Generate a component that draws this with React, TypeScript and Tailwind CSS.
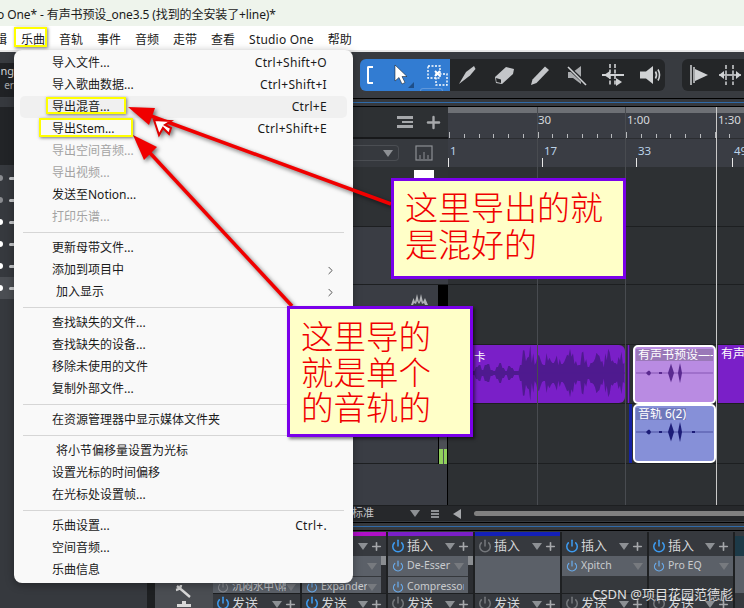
import { ChevronRight, Plus, Power } from "lucide-react";

type MenuEntry = { label?: string; keys?: string; off?: boolean; sub?: boolean; indent?: boolean; hot?: boolean; sep?: boolean };
type Plugin = { name: string; on: boolean; noTri?: boolean };

const menu: MenuEntry[] = [
  { label: "导入文件...", keys: "Ctrl+Shift+O" },
  { label: "导入歌曲数据...", keys: "Ctrl+Shift+I" },
  { label: "导出混音...", keys: "Ctrl+E", hot: true },
  { label: "导出Stem...", keys: "Ctrl+Shift+E" },
  { label: "导出空间音频...", off: true },
  { label: "导出视频...", off: true },
  { label: "发送至Notion..." },
  { label: "打印乐谱...", off: true },
  { sep: true },
  { label: "更新母带文件..." },
  { label: "添加到项目中", sub: true },
  { label: "加入显示", sub: true, indent: true },
  { sep: true },
  { label: "查找缺失的文件..." },
  { label: "查找缺失的设备..." },
  { label: "移除未使用的文件" },
  { label: "复制外部文件..." },
  { sep: true },
  { label: "在资源管理器中显示媒体文件夹" },
  { sep: true },
  { label: "将小节偏移量设置为光标", indent: true },
  { label: "设置光标的时间偏移" },
  { label: "在光标处设置帧..." },
  { sep: true },
  { label: "乐曲设置...", keys: "Ctrl+." },
  { label: "空间音频..." },
  { label: "乐曲信息" },
];

const topMenu = ["音轨", "事件", "音频", "走带", "查看", "Studio One", "帮助"];

const leftRows = [
  { dot: "bg-[#8a8c90]", hot: false },
  { dot: "bg-[#8a8c90]", hot: false },
  { dot: "bg-white", hot: false },
  { dot: "bg-white", hot: false },
  { dot: "bg-white", hot: false },
  { dot: "bg-white", hot: true },
];

const bigEnvelope = [2, 6, 8, 3, 8, 9, 3, 2, 6, 10, 5, 2, 7, 5, 2, 2, 8, 26, 16, 28, 20, 12, 22, 14, 8, 20, 16, 10, 18, 14, 9, 16, 22, 26, 20, 12, 8, 24, 14, 6, 10, 16, 24, 18, 12, 20, 26, 14, 10, 16, 22, 12, 16];
const bigWave = Array.from({ length: 104 }, (_, i) => {
  const base = bigEnvelope[Math.floor(i / 2)];
  return base < 11 ? base : base * (0.45 + 0.55 * Math.abs(Math.sin(i * 1.73)));
});
const ticks = Array.from({ length: 21 }, (_, i) => i);

function wavePath(peaks: number[], step: number, mid: number) {
  const top = peaks.map((p, i) => `${i * step},${mid - p}`);
  const bottom = peaks.map((p, i) => `${i * step},${mid + p}`).reverse();
  return `M${top.join(" L")} L${bottom.join(" L")} Z`;
}

function Tri({ className = "fill-[#8d9094]" }: { className?: string }) {
  return (
    <svg width="10" height="7" viewBox="0 0 10 7" className={className}>
      <path d="M0 0H10L5 7Z" />
    </svg>
  );
}

function Icon({ children, dim = false }: { children: React.ReactNode; dim?: boolean }) {
  return (
    <svg width="24" height="24" viewBox="0 0 24 24" className={dim ? "fill-[#c4c6c9] stroke-[#c4c6c9]" : "fill-white stroke-white"} strokeWidth="0">
      {children}
    </svg>
  );
}

function Toolbar() {
  return (
    <div className="flex h-[48px] items-center border-t-2 border-[#e9e9e9] bg-[#383b40]">
      <div className="flex h-full w-[360px] flex-col justify-start pt-[11px] text-[11px] leading-[15px] text-[#d8d8d8]">
        <div className="w-[14px] overflow-hidden bg-[#202225] text-right">ng</div>
        <div className="w-[14px] overflow-hidden bg-[#202225] pb-[4px] text-right text-[10px] text-[#a8aaad]">er</div>
      </div>
      <div className="relative flex h-[32px] w-[90px] items-center rounded-l-md bg-[#327cd2] pl-[7px]">
        <div className="h-[18px] w-[6px] rounded-l-[2px] border-y-2 border-l-2 border-white" />
        <div className="ml-[17px] flex items-center gap-[12px]">
          <Icon>
            <path d="M5 2 L5 18 L9 14.5 L12 21 L15 19.5 L12 13.5 L17 13.5 Z" stroke="#111" strokeWidth="0.5" />
          </Icon>
          <svg width="24" height="24" viewBox="0 0 24 24" fill="none">
            <rect x="2" y="3" width="12" height="12" stroke="white" strokeDasharray="2 1.5" strokeWidth="1.4" />
            <rect x="10" y="11" width="11" height="11" stroke="white" strokeDasharray="2 1.5" strokeWidth="1.4" />
            <path d="M9 8l5 5m0-5l-5 5" stroke="white" strokeWidth="2" />
          </svg>
        </div>
        <svg width="6" height="6" viewBox="0 0 6 6" className="absolute right-[36px] bottom-[3px] fill-[#1e4e88]">
          <path d="M6 0V6H0Z" />
        </svg>
        <div className="absolute right-[7px] bottom-0 h-[3px] w-[23px] rounded-t-md border-x border-t border-[#5f97da]" />
      </div>
      <div className="flex h-[32px] w-[215px] items-center gap-[12.5px] rounded-r-md bg-[#242628] pl-[5px]">
        <Icon dim>
          <path d="M4 21 L11 9 L19 3 L20.5 6 L15 12.5 Z" />
        </Icon>
        <Icon dim>
          <path d="M3 14 L14 4 L22 6 L21 11 L10 21 L4 20 Z M4 15 L9 16.5 L9 20 L4.5 19 Z" fillRule="evenodd" />
        </Icon>
        <Icon dim>
          <path d="M3 22 L4.5 16.5 L17 3.5 L21 7 L8.5 20 Z" />
        </Icon>
        <svg width="24" height="24" viewBox="0 0 24 24">
          <path d="M3 9H8L16 3V21L8 15H3Z" fill="#a9abae" />
          <path d="M2 3L22 22" stroke="#242628" strokeWidth="3.5" />
          <path d="M3 4L21 22" stroke="#d0d2d4" strokeWidth="1.6" />
        </svg>
        <svg width="24" height="24" viewBox="0 0 24 24" stroke="#d0d2d4" fill="#d0d2d4">
          <path d="M9 1V23M14 1V23" strokeWidth="1.6" strokeDasharray="4 1.5" />
          <path d="M1 12H23" strokeWidth="2" />
          <path d="M9 8L3 12L9 16ZM15 15L21 19L15 23Z" strokeWidth="0" />
        </svg>
        <svg width="24" height="24" viewBox="0 0 24 24" fill="none">
          <path d="M2 8.5H8L15 3V21L8 15.5H2Z" fill="#d0d2d4" />
          <path d="M17.5 8.5Q19.5 12 17.5 15.5M20 6.5Q23 12 20 17.5" stroke="#d0d2d4" strokeWidth="1.6" />
        </svg>
      </div>
      <div className="ml-[17px] flex h-[32px] flex-1 items-center gap-[7px] rounded-l-md bg-[#242628] pl-[5px]">
        <svg width="24" height="24" viewBox="0 0 24 24" stroke="#d0d2d4" fill="#d0d2d4">
          <path d="M4 2V22M7 4V20" strokeWidth="1.5" />
          <path d="M8 6L21 12L8 18Z" strokeWidth="0" />
        </svg>
        <svg width="24" height="24" viewBox="0 0 24 24" stroke="#d0d2d4" fill="#d0d2d4">
          <path d="M8 2V22M15 2V22" strokeWidth="1.5" strokeDasharray="4 1.5" />
          <path d="M1 12H23" strokeWidth="1.6" />
          <path d="M1 12L6 8V16ZM23 12L18 8V16Z" strokeWidth="0" />
        </svg>
      </div>
    </div>
  );
}

function Rule() {
  return (
    <div className="ml-[14px] flex h-[9px] flex-col border-y border-black">
      <div className="h-[3px]" />
      <div className="h-px bg-[#2f6aa8]" />
    </div>
  );
}

function Sidebar() {
  return (
    <div className="flex w-[448px] shrink-0">
      <div className="flex w-[353px] flex-col">
        <div className="h-[58px] w-[14px] bg-[#222427]" />
        <div className="h-[2px]" />
        {leftRows.map((r, i) => (
          <div key={i} className={`flex h-[22px] w-[14px] items-center justify-between ${r.hot ? "bg-[#4b4e53]" : "bg-[#36393e]"}`}>
            <div className={`-ml-[3px] size-[6px] rounded-full ${r.dot}`} />
            <div className="h-[3px] w-[5px] rounded-l-full bg-[#c9cbce]" />
          </div>
        ))}
      </div>
      <div className="flex w-[95px] flex-col">
        <div className="flex h-[32px] items-center border-b-2 border-[#17181a] bg-[#2d3033] pl-[44px]">
          <div className="flex w-[16px] flex-col gap-[2px]">
            <div className="h-[2.5px] bg-[#a6a8ab]" />
            <div className="ml-[5px] h-[2.5px] bg-[#a6a8ab]" />
            <div className="h-[2.5px] bg-[#a6a8ab]" />
          </div>
          <Plus size={19} strokeWidth={3} color="#a6a8ab" className="ml-[11px]" />
        </div>
        <div className="flex h-[28px] items-center bg-[#36393e]">
          <div className="flex h-[16px] w-[46px] items-center justify-end rounded-r-[4px] border border-l-0 border-[#4b4e53] pr-[5px]">
            <Tri />
          </div>
          <svg width="18" height="16" viewBox="0 0 18 16" fill="none" stroke="#8d9094" className="ml-[16px]">
            <rect x="1" y="1" width="16" height="14" strokeWidth="1.2" />
            <path d="M5 14V10M9 14V7M13 14V10" strokeWidth="1" />
          </svg>
        </div>
        <div className="h-[60px] border-b border-[#1d1f21] bg-[#2e3134]">
          <div className="mt-[3px] ml-[61px] h-[10px] w-[20px] bg-white" />
        </div>
        <div className="h-[58px] border-b border-[#1d1f21] bg-[#3a3d44]" />
        <div className="flex h-[60px] bg-[#3a3d44]">
          <div className="flex-1 border-b border-[#1d1f21] pt-[8px] pl-[58px]">
            <svg width="17" height="12" viewBox="0 0 17 12" fill="#b0b2b5">
              <path d="M0 12L2.5 5L4 9L6 1L8 9L10 1L12 9L14 5L17 12H14L13 10L11 11L10 8L8 11L6 8L5 11L3 10L2 12Z" />
            </svg>
          </div>
          <div className="w-[10px] bg-black" />
        </div>
        <div className="flex h-[59px] bg-[#3a3d44]">
          <div className="flex-1 border-b border-[#1d1f21]" />
          <div className="w-[10px] bg-black" />
        </div>
        <div className="flex h-[60px] bg-[#3a3d44]">
          <div className="flex-1 border-b border-[#1d1f21]" />
          <div className="flex w-[10px] flex-col justify-end border-x border-black bg-[#4c4f55]">
            <div className="flex h-[15px] gap-px">
              <div className="flex-1 bg-[#90d05c]" />
              <div className="flex-1 bg-[#90d05c]" />
            </div>
          </div>
        </div>
        <div className="flex h-[41px] bg-[#3a3d44]">
          <div className="flex-1" />
          <div className="w-px bg-black" />
        </div>
        <div className="flex h-[16px] items-center border-t border-[#1d1f21] bg-[#26282b] text-[11px] text-[#c4c6c9]">
          <span className="-ml-px w-[58px] overflow-hidden whitespace-nowrap">标准</span>
          <Tri />
          <div className="ml-[11px] flex w-[8px] flex-col gap-px">
            <div className="h-[2px] bg-[#8d9094]" />
            <div className="h-[2px] bg-[#8d9094]" />
            <div className="h-[2px] bg-[#8d9094]" />
          </div>
        </div>
      </div>
    </div>
  );
}

function Clip({ title, bg, tag, wave, tagWidth, extra = false }: { title: string; bg: string; tag: string; wave: string; tagWidth: string; extra?: boolean }) {
  return (
    <div className={`flex h-full w-[83px] flex-col rounded-[5px] border-2 border-white ${bg} px-[1px] pt-[2px]`}>
      <div className={`h-[12px] overflow-hidden whitespace-nowrap pl-[2px] text-[12px] leading-[12px] text-white ${tag} ${tagWidth}`}>{title}</div>
      <svg width="77" height="30" viewBox="0 0 77 30">
        <path d="M0 12H77" stroke={wave} strokeWidth="1" opacity="0.55" />
        <path d="M10 12Q12 9.5 13 9.5Q14 9.5 15 12Q14 14.5 13 14.5Q12 14.5 10 12Z" fill={wave} />
        <path d="M23 12H26" stroke={wave} strokeWidth="2" />
        <path d="M32 12Q34.5 4 35 2.5Q35.5 4 38 12Q35.5 20 35 21.5Q34.5 20 32 12Z" fill={wave} />
        <path d="M42 12Q43.5 4 44 2Q44.5 4 46 12Q44.5 20 44 22Q43.5 20 42 12Z" fill={wave} />
        {extra && <path d="M56 12H59" stroke={wave} strokeWidth="2" />}
      </svg>
    </div>
  );
}

function Timeline() {
  const times = [
    { t: "30", w: "w-[89px]" },
    { t: "1:00", w: "w-[91px]" },
    { t: "1:30", w: "w-[28px]" },
  ];
  const bars = [
    { t: "1", w: "w-[94px]" },
    { t: "17", w: "w-[94px]" },
    { t: "33", w: "w-[96px]" },
    { t: "49", w: "w-[11px]" },
  ];
  return (
    <div className="relative flex min-w-0 flex-1 flex-col bg-[#2d3033]">
      <div className="h-[6px] bg-[#6d7075]" />
      <div className="relative flex h-[26px] border-b border-[#2b2d31] bg-[#3a3d44] text-[11.5px] leading-[14px] text-[#d5d8dc]">
        <div className="w-[90px] shrink-0" />
        {times.map((x) => (
          <div key={x.t} className={`${x.w} shrink-0 whitespace-nowrap`}>
            {x.t}
          </div>
        ))}
        {ticks.map((i) => (
          <div
            key={i}
            className={`absolute bottom-0 w-px bg-[#b8babd] ${i % 6 === 0 ? "h-[6px]" : "h-[4px]"}`}
            style={{ left: Math.round(i * 14.75) + 1 }}
          />
        ))}
      </div>
      <div className="flex h-[28px] bg-[#3a3d44] pt-[5px] text-[11.5px] leading-[14px] text-[#bcd3e8]">
        {bars.map((x) => (
          <div key={x.t} className={`${x.w} flex shrink-0 flex-col justify-between`}>
            <span className="pl-[2px]">{x.t}</span>
            <div className="h-[9px] w-px bg-[#e8e8e8]" />
          </div>
        ))}
      </div>
      <div className="h-[60px] border-b border-[#1d1f21]" />
      <div className="h-[58px] border-b border-[#1d1f21]" />
      <div className="h-[60px] border-b border-[#1d1f21]" />
      <div className="relative h-[59px] border-b border-[#1d1f21]">
        <div className="absolute top-0 bottom-0 left-0 w-[177px] overflow-hidden rounded-r-md bg-[#7a1fc8]">
          <span className="absolute top-[3px] left-[26px] text-[11.5px] text-white">卡</span>
          <svg width="152" height="58" viewBox="0 0 152 58" className="absolute top-0 left-[25px]">
            <path d={wavePath(bigWave, 1.47, 28)} fill="#4f1a8f" />
            <path d="M0 28H152" stroke="#4f1a8f" />
          </svg>
        </div>
        <div className="absolute top-0 bottom-0 left-[179px] w-[3px] border-x border-[#3c1a66] bg-[#7a1fc8]" />
        <div className="absolute top-0 left-[185px] h-[59px]">
          <Clip title="有声书预设——" bg="bg-[#b98be2]" tag="bg-[#9a78b8]" wave="#5a2a90" tagWidth="w-[77px]" />
        </div>
        <div className="absolute top-0 right-0 bottom-0 left-[270px] overflow-hidden whitespace-nowrap bg-[#7a1fc8] pl-[3px] text-[12px] leading-[18px] text-white">有声书</div>
      </div>
      <div className="relative h-[60px] border-b border-[#1d1f21]">
        <div className="absolute top-0 bottom-0 left-[181px] w-[3px] bg-[#1420a0]" />
        <div className="absolute top-0 left-[185px] h-[59px]">
          <Clip title="音轨 6(2)" bg="bg-[#8690d8]" tag="bg-[#6f78bb]" wave="#1c1c78" tagWidth="w-[50px]" extra />
        </div>
      </div>
      <div className="flex-1" />
      <div className="flex h-[16px] items-center border-t border-[#1d1f21] bg-[#26282b] pl-[5px]">
        <svg width="8" height="10" viewBox="0 0 8 10" fill="#a6a8ab">
          <path d="M8 0V10L0 5Z" />
        </svg>
        <div className="ml-[13px] h-[5px] flex-1 rounded-l-full bg-[#808080]" />
      </div>
      <div className="pointer-events-none absolute top-0 bottom-[16px] left-[89px] w-px bg-[#484b50]" />
      <div className="pointer-events-none absolute top-0 bottom-[16px] left-[177px] w-px bg-[#484b50]" />
      <div className="pointer-events-none absolute top-0 bottom-[16px] left-[268px] w-px bg-[#c9c9c9]" />
    </div>
  );
}

function Strip({ color, on = true, plugins = [], sendOn = false, scroll = false, width = "w-[85px]" }: { color: string; on?: boolean; plugins?: Plugin[]; sendOn?: boolean; scroll?: boolean; width?: string }) {
  return (
    <div className={`flex shrink-0 flex-col ${width}`}>
      <div className={`h-[4px] ${color}`} />
      <div className="flex h-[20px] items-center bg-[#36393e] px-[3px]">
        <Power size={14} strokeWidth={2.6} color={on ? "#3d9bf0" : "#74777b"} />
        <span className="ml-[2px] flex-1 text-[13px] text-[#d4d6d8]">插入</span>
        <Tri />
        <Plus size={13} strokeWidth={3} color="#a6a8ab" className="ml-[2px]" />
      </div>
      <div className="flex h-[37px] bg-[#35383c]">
        <div className="min-w-0 flex-1 overflow-hidden">
          {plugins.length === 0 ? (
            <div className="h-full bg-[#5b6068]" />
          ) : (
            plugins.map((p, i) => (
              <div key={i} className="flex h-[21px] items-center border-b border-[#35383c] bg-[#5b6068] px-[4px]">
                <Power size={12} strokeWidth={2.4} color={p.on ? "#6aaef0" : "#8a8d91"} />
                <span className="ml-[3px] flex-1 overflow-hidden text-[10.5px] whitespace-nowrap text-[#c9cbce]">{p.name}</span>
                {!p.noTri && <Tri className="fill-[#777a7f]" />}
              </div>
            ))
          )}
        </div>
        {scroll && (
          <div className="w-[5px] shrink-0 bg-[#2b2d31]">
            <div className="h-[9px] bg-[#8a8d91]" />
          </div>
        )}
      </div>
      <div className="flex h-[15px] items-start border-t border-[#1d1f21] bg-[#36393e] px-[3px]">
        <Power size={14} strokeWidth={2.6} color={sendOn ? "#3d9bf0" : "#74777b"} className="mt-[2px]" />
        <span className="ml-[2px] flex-1 text-[13px] leading-[18px] text-[#d4d6d8]">发送</span>
        <div className="mt-[4px] flex items-center">
          <Tri />
          <Plus size={13} strokeWidth={3} color="#a6a8ab" className="ml-[2px]" />
        </div>
      </div>
    </div>
  );
}

function Console() {
  return (
    <div className="flex h-[77px] pt-px">
      <div className="w-[147px] shrink-0" />
      <div className="w-[8px] shrink-0 bg-[#1e2022]" />
      <div className="flex w-[58px] shrink-0 flex-col items-center justify-end gap-[2px] bg-[#4a4d52] pb-[1px]">
        <svg width="18" height="14" viewBox="0 0 18 14" fill="none" stroke="#d8d8d8" strokeWidth="2.4">
          <path d="M2 2L8 7L15 13M1 6Q6 5 6 1" />
        </svg>
        <svg width="18" height="7" viewBox="0 0 18 7" fill="#d8d8d8">
          <path d="M2 7V4H7V1H11V4H16V7Z" />
        </svg>
      </div>
      <div className="flex flex-1 gap-[2px] overflow-hidden bg-[#1e2022]">
        <Strip color="bg-[#6a3a8a]" width="w-[87px]" plugins={[{ name: "", on: false }, { name: "沉闷水中\\隔..", on: false }]} sendOn />
        <Strip color="bg-[#b010c8]" plugins={[{ name: "", on: true }, { name: "Expander", on: true }]} sendOn scroll width="w-[84px]" />
        <Strip color="bg-[#7a1fc8]" plugins={[{ name: "De-Esser", on: true }, { name: "Compressor", on: true, noTri: true }]} scroll />
        <Strip color="bg-[#1420b8]" on={false} />
        <Strip color="bg-[#36393e]" plugins={[{ name: "Xpitch", on: true }]} />
        <Strip color="bg-[#36393e]" plugins={[{ name: "Pro EQ", on: true }]} width="w-[84px]" />
        <div className="flex-1 bg-[#36393e]">
          <div className="mt-[4px] h-[20px] bg-[#1d3a48]" />
          <div className="h-[37px] bg-[#5b6068]" />
        </div>
      </div>
    </div>
  );
}

function SongMenu() {
  return (
    <div className="absolute top-[50px] left-[14px] flex h-[533px] w-[339px] flex-col rounded-lg bg-[#f9f9f9] pt-[2px] shadow-[0_2px_8px_rgba(0,0,0,0.35)]">
      {menu.map((m, i) =>
        m.sep ? (
          <div key={i} className="flex h-[9px] shrink-0 items-center px-[9px]">
            <div className="h-px w-full bg-[#d6d6d6]" />
          </div>
        ) : (
          <div
            key={i}
            className={`mx-[6px] flex h-[22px] shrink-0 items-center justify-between rounded-[5px] pr-[20px] text-[12px] ${m.indent ? "pl-[36px]" : "pl-[32px]"} ${m.hot ? "bg-[#f0f0f0]" : ""} ${m.off ? "text-[#a3a3a3]" : "text-[#1a1a1a]"}`}
          >
            <span>{m.label}</span>
            {m.keys && <span className="tracking-[0.3px]">{m.keys}</span>}
            {m.sub && <ChevronRight size={13} strokeWidth={1.5} className="-mr-[10px] text-[#333]" />}
          </div>
        ),
      )}
    </div>
  );
}

function Arrows() {
  return (
    <svg width="744" height="608" viewBox="0 0 744 608" className="pointer-events-none absolute top-0 left-0 drop-shadow-[2px_2px_2px_rgba(0,0,0,0.55)]">
      <path d="M391 204L151 116" stroke="#f00000" strokeWidth="3.5" />
      <path d="M128 107L155 108L149 125Z" fill="#f00000" />
      <path d="M292 306L150 153" stroke="#f00000" strokeWidth="3.5" />
      <path d="M133 135L157 147L144 160Z" fill="#f00000" />
      <path d="M154 120L159 135L163 128L169 134L171 128L165 125L171 121Z" fill="#fff" stroke="#e00000" strokeWidth="2" />
    </svg>
  );
}

function Note({ lines, className }: { lines: string[]; className: string }) {
  return (
    <div className={`absolute border-[3px] border-[#7a00ea] bg-[#ffffc8] font-['Noto_Sans_CJK_SC',serif] font-light text-[#f00000] ${className}`}>
      {lines.map((l) => (
        <div key={l}>{l}</div>
      ))}
    </div>
  );
}

function App() {
  return (
    <div className="relative flex h-[608px] w-[744px] flex-col overflow-hidden bg-[#36393e] font-['Noto_Sans','Noto_Sans_CJK_SC',sans-serif]">
      <div className="h-[26px] shrink-0 overflow-hidden bg-[#eef4ec] pt-[6px] text-[12px] leading-[18px] tracking-[-0.1px] whitespace-nowrap text-[#1a1a1a]">
        <span className="-ml-[3px]">o One* - 有声书预设_one3.5 (找到的全安装了+line)*</span>
      </div>
      <div className="flex h-[24px] shrink-0 items-center bg-white pt-[3px] text-[12px] text-[#1a1a1a]">
        <span className="w-[7px] overflow-hidden whitespace-nowrap">
          <span className="-ml-[5px] inline-block">辑</span>
        </span>
        <span className="ml-[14px]">乐曲</span>
        {topMenu.map((m) => (
          <span key={m} className={`ml-[14px] whitespace-nowrap ${m === "Studio One" ? "tracking-[0.2px]" : ""}`}>
            {m}
          </span>
        ))}
      </div>
      <Toolbar />
      <Rule />
      <div className="flex h-[414px] shrink-0 items-stretch">
        <Sidebar />
        <Timeline />
      </div>
      <div className="h-px shrink-0" />
      <Rule />
      <Console />

      <SongMenu />
      <Arrows />

      <div className="absolute top-[27px] left-[14px] h-[20px] w-[33px] border-2 border-[#ffff00] shadow-[1px_1px_3px_rgba(0,0,0,0.5)]" />
      <div className="absolute top-[97px] left-[46px] h-[17px] w-[80px] border-2 border-[#ffff00] shadow-[1px_1px_3px_rgba(0,0,0,0.5)]" />
      <div className="absolute top-[118px] left-[39px] h-[19px] w-[94px] border-2 border-[#ffff00] shadow-[1px_1px_3px_rgba(0,0,0,0.5)]" />

      <Note lines={["这里导出的就", "是混好的"]} className="top-[178px] left-[391px] h-[101px] w-[235px] pt-[7px] pl-[11px] text-[33px] leading-[37px]" />
      <Note lines={["这里导的", "就是单个", "的音轨的"]} className="top-[306px] left-[287px] h-[131px] w-[186px] pt-[8px] pl-[11px] text-[32.5px] leading-[35.5px] shadow-[2px_2px_3px_rgba(0,0,0,0.5)]" />

      <div className="absolute top-[585px] right-[11px] text-[13px] leading-[18px] text-white/85">CSDN @项目花园范德彪</div>
    </div>
  );
}

export default App;
